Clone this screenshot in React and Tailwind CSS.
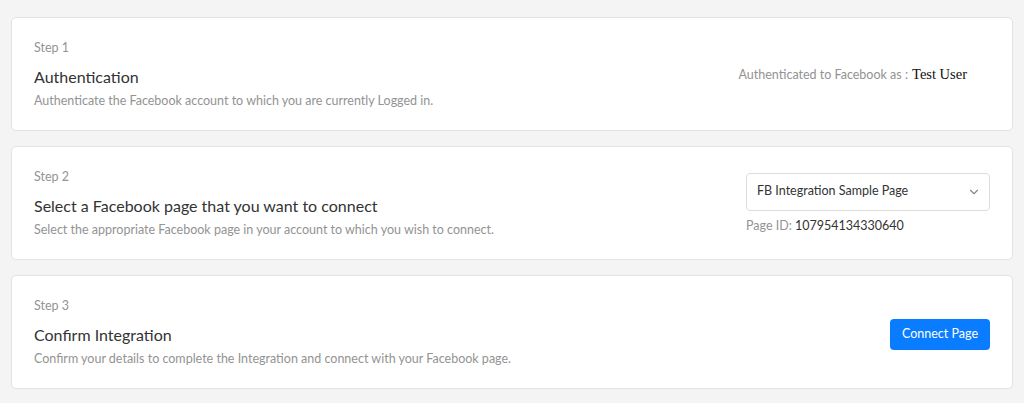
import React from 'react';
import { ChevronDown } from 'lucide-react';

const StepCard = ({ step, title, description, children }) => {
  return (
    <div className="flex items-center justify-between bg-white border border-[#e3e3e3] rounded-[5px] pl-[22px] pr-[22px] pt-[21px] pb-[20px]">
      <div>
        <div className="text-[12.5px] leading-[18px] text-[#939393]">{step}</div>
        <h2 className="mt-1.5 text-[16px] leading-[28px] text-[#333]">{title}</h2>
        <p className="mt-[1px] text-[12.5px] leading-[18px] text-[#939393]">{description}</p>
      </div>
      {children}
    </div>
  );
};

const App = () => {
  return (
    <div className="min-h-[403px] bg-[#f4f4f4] px-[11px] pt-[17px] pb-4 flex flex-col gap-[15px]" style={{ fontFamily: 'Lato, "Open Sans", sans-serif' }}>
      {/* Step 1 */}
      <StepCard
        step="Step 1"
        title="Authentication"
        description="Authenticate the Facebook account to which you are currently Logged in."
      >
        <div className="mr-[23px] text-[12.5px] text-[#939393] flex items-baseline">
          <span>Authenticated to Facebook as :</span>
          <span className="ml-1 text-[14.5px] text-[#111]" style={{ fontFamily: '"Liberation Serif", serif' }}>Test User</span>
        </div>
      </StepCard>

      {/* Step 2 */}
      <StepCard
        step="Step 2"
        title="Select a Facebook page that you want to connect"
        description="Select the appropriate Facebook page in your account to which you wish to connect."
      >
        <div className="w-[244px]">
          <div className="h-[38px] border border-[#dcdcdc] rounded-[4px] flex items-center justify-between pl-[10px] pr-[8px]">
            <span className="text-[12.5px] text-[#333]">FB Integration Sample Page</span>
            <ChevronDown className="h-3.5 w-3.5 text-[#888]" strokeWidth={2} />
          </div>
          <div className="mt-[6px] text-[12.5px] leading-[18px] text-[#939393]">
            Page ID: <span className="text-[#333]">107954134330640</span>
          </div>
        </div>
      </StepCard>

      {/* Step 3 */}
      <StepCard
        step="Step 3"
        title="Confirm Integration"
        description="Confirm your details to complete the Integration and connect with your Facebook page."
      >
        <button className="mt-[3px] h-[31px] w-[100px] bg-[#0a7cff] text-white text-[12.5px] rounded-[4px]">
          Connect Page
        </button>
      </StepCard>
    </div>
  );
};

export default App;
